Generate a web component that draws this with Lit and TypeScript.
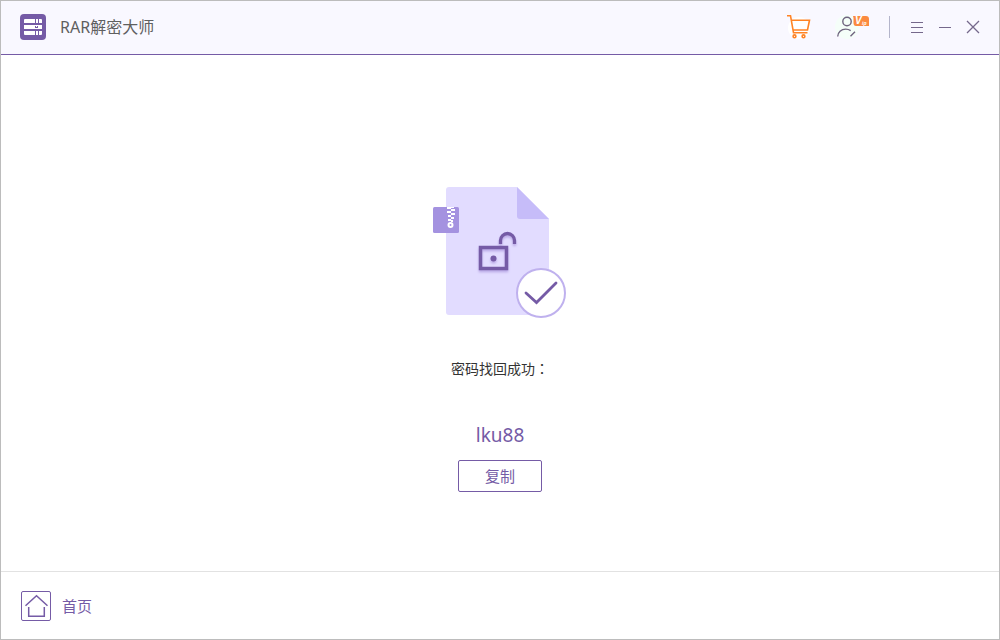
import { LitElement, html, css } from "lit";
import { customElement, property } from "lit/decorators.js";

@customElement("title-bar")
class TitleBar extends LitElement {
  static styles = css`
    :host { display: block; }
    .bar {
      display: flex;
      align-items: center;
      justify-content: space-between;
      height: 52px;
      padding: 0 15px 1px 19px;
      background: #f9f8ff;
      border-bottom: 1px solid #755ba6;
    }
    .brand, .actions { display: flex; align-items: center; }
    .brand { gap: 14px; }
    .title { margin: 0; font-size: 16px; font-weight: 400; line-height: 24px; color: #5f5f5f; }
    .icon {
      display: block;
      padding: 0;
      border: 0;
      background: none;
      cursor: pointer;
    }
    svg { display: block; }
    .cart { margin-right: 23px; }
    .divider { width: 1px; height: 22px; margin: 0 16px 0 19px; background: #b4b5cb; }
    .badge { font: italic 700 10px "Liberation Sans", sans-serif; fill: #fff; }
    .badge-small { font-size: 5px; }
  `;
  @property() heading = "";

  render() {
    return html`
      <header class="bar">
        <div class="brand">
          <svg width="26" height="26" viewBox="0 0 26 26" aria-hidden="true">
            <rect width="26" height="26" rx="4" fill="#755ba6" />
            <path fill="#fff" d="M4 6q0-1 1-1h10v4H4zM16 5h2v4h-2zM19 5h2q1 0 1 1v3h-3zM4 11h11v4H4zM18 11h4v4h-4zM4 17h11v4H5q-1 0-1-1zM16 17h2v4h-2zM19 17h3v3q0 1-1 1h-2z" />
            <path fill="none" stroke="#fff" d="M14 11.500h5M14 14.500h5" />
            <path fill="#fff" d="M16 12h1v1h-1z" />
          </svg>
          <h1 class="title">${this.heading}</h1>
        </div>
        <div class="actions">
          <button class="icon cart" aria-label="购买">
            <svg width="26" height="26" viewBox="0 0 26 26">
              <circle cx="13" cy="14" r="11" fill="#fff" />
              <path fill="none" stroke="#ff8324" stroke-width="1.6" d="M1 1.700h3.500L7.500 18.700h14M5.200 6.200h18.300l-2 9.800H7.300" />
              <circle cx="8.500" cy="22.300" r="1.400" fill="none" stroke="#ff8324" stroke-width="1.600" />
              <circle cx="17.500" cy="22.300" r="1.400" fill="none" stroke="#ff8324" stroke-width="1.600" />
            </svg>
          </button>
          <button class="icon" aria-label="会员账户">
            <svg width="35" height="26" viewBox="0 0 35 26">
              <circle cx="12" cy="13" r="12" fill="#f5fef9" />
              <circle cx="12" cy="7.500" r="4.200" fill="none" stroke="#6f647f" stroke-width="1.400" />
              <path fill="none" stroke="#6f647f" stroke-width="1.400" d="M2.700 22.500c0-4.400 3.600-7.400 8-7.400 2 0 3.500.5 5 1.500M15.500 22.200l4.500-4.500" />
              <path fill="#fb8a40" d="M18 2h13q3 0 3 3v7H21q-2.500 0-2.500-3V4z" />
              <text class="badge" x="20" y="10">V</text>
              <text class="badge badge-small" x="27" y="11">ip</text>
            </svg>
          </button>
          <span class="divider"></span>
          <button class="icon" aria-label="菜单">
            <svg width="28" height="28" viewBox="0 0 28 28">
              <path stroke="#75688b" d="M5 9.500h12M5 14.500h12M5 19.500h12" />
            </svg>
          </button>
          <button class="icon" aria-label="最小化">
            <svg width="28" height="28" viewBox="0 0 28 28">
              <path stroke="#75688b" d="M5 14.500h12" />
            </svg>
          </button>
          <button class="icon" aria-label="关闭">
            <svg width="22" height="28" viewBox="0 0 22 28">
              <path stroke="#75688b" stroke-width="1.300" d="M5 8l12 12M17 8L5 20" />
            </svg>
          </button>
        </div>
      </header>
    `;
  }
}

@customElement("unlocked-file")
class UnlockedFile extends LitElement {
  static styles = css`
    :host { display: block; }
    svg { display: block; }
    .lock { filter: drop-shadow(0 2px 1px #b9a8e6); }
  `;

  render() {
    return html`
      <svg width="134" height="132" viewBox="0 0 134 132" aria-hidden="true">
        <path fill="#e2dcff" d="M16 0h68l32 32v93q0 3-3 3H16q-3 0-3-3V3q0-3 3-3z" />
        <path fill="#c6bcf9" d="M84 0l32 32H87q-3 0-3-3z" />
        <rect y="20" width="26" height="26" rx="1.500" fill="#a492e0" />
        <path fill="#fff" d="M14 20h4v2h-4zM18 22h4v2h-4zM14 24h4v2h-4zM18 20h3v1h-3zM18 26h4v2h-4zM15 28h3v2h-3zM18 30h3v2h-3zM15 32h3v2h-3zM18 33h2v2h-2z" />
        <circle cx="17.500" cy="38" r="2" fill="none" stroke="#fff" stroke-width="2" />
        <g class="lock">
          <rect x="47.500" y="60.500" width="26" height="21" fill="none" stroke="#755ba6" stroke-width="3.500" />
          <circle cx="60.500" cy="71.500" r="3" fill="#755ba6" />
          <path fill="none" stroke="#755ba6" stroke-width="3.300" d="M67.500 57v-3.500a7 7 0 0 1 14 0V57" />
        </g>
        <circle cx="108" cy="106" r="24" fill="#fff" stroke="#bfb1ee" stroke-width="2" />
        <path fill="none" stroke="#755ba6" stroke-width="2.800" stroke-linecap="round" d="M93 106l10.500 9.500L123 96" />
      </svg>
    `;
  }
}

@customElement("app-root")
class AppRoot extends LitElement {
  static styles = css`
    :host {
      display: flex;
      flex-direction: column;
      box-sizing: border-box;
      min-height: 100vh;
      border: 1px solid #bcbcbc;
      background: #fff;
      font-family: "Noto Sans", "Noto Sans CJK SC", sans-serif;
      color: #755ba6;
    }
    .result {
      flex: 1;
      display: flex;
      flex-direction: column;
      align-items: center;
      justify-content: center;
      padding-top: 53px;
    }
    .message { margin: 40px 0 0; font-size: 14px; line-height: 20px; color: #333; }
    .colon { font-family: "Noto Sans CJK TC", sans-serif; line-height: 1; }
    .password { margin: 42px 0 11px; font-size: 19px; line-height: 28px; }
    .copy {
      width: 84px;
      height: 32px;
      padding: 0;
      border: 1px solid #755ba6;
      border-radius: 2px;
      background: #fff;
      color: inherit;
      font-family: inherit;
      font-size: 15px;
      line-height: 20px;
      cursor: pointer;
    }
    .footer {
      display: flex;
      align-items: center;
      height: 67px;
      padding: 0 20px;
      border-top: 1px solid #e2e2e2;
    }
    .home {
      display: flex;
      align-items: center;
      gap: 11px;
      color: inherit;
      font-size: 15px;
      line-height: 20px;
      text-decoration: none;
    }
  `;
  @property() password = "lku88";

  private copy() {
    navigator.clipboard?.writeText(this.password);
  }

  render() {
    return html`
      <title-bar heading="RAR解密大师"></title-bar>
      <main class="result">
        <unlocked-file></unlocked-file>
        <p class="message">密码找回成功<span class="colon" lang="zh-TW">：</span></p>
        <output class="password">${this.password}</output>
        <button class="copy" @click=${this.copy}>复制</button>
      </main>
      <footer class="footer">
        <a class="home" href="#">
          <svg width="30" height="30" viewBox="0 0 30 30" fill="none" stroke="#755ba6" aria-hidden="true">
            <rect x=".5" y=".5" width="29" height="29" rx="1.500" />
            <path stroke-width="1.500" d="M4.500 14.700L15.500 4.800l11 9.900M7.700 16v9.300h15.600V16" />
          </svg>
          首页
        </a>
      </footer>
    `;
  }
}
